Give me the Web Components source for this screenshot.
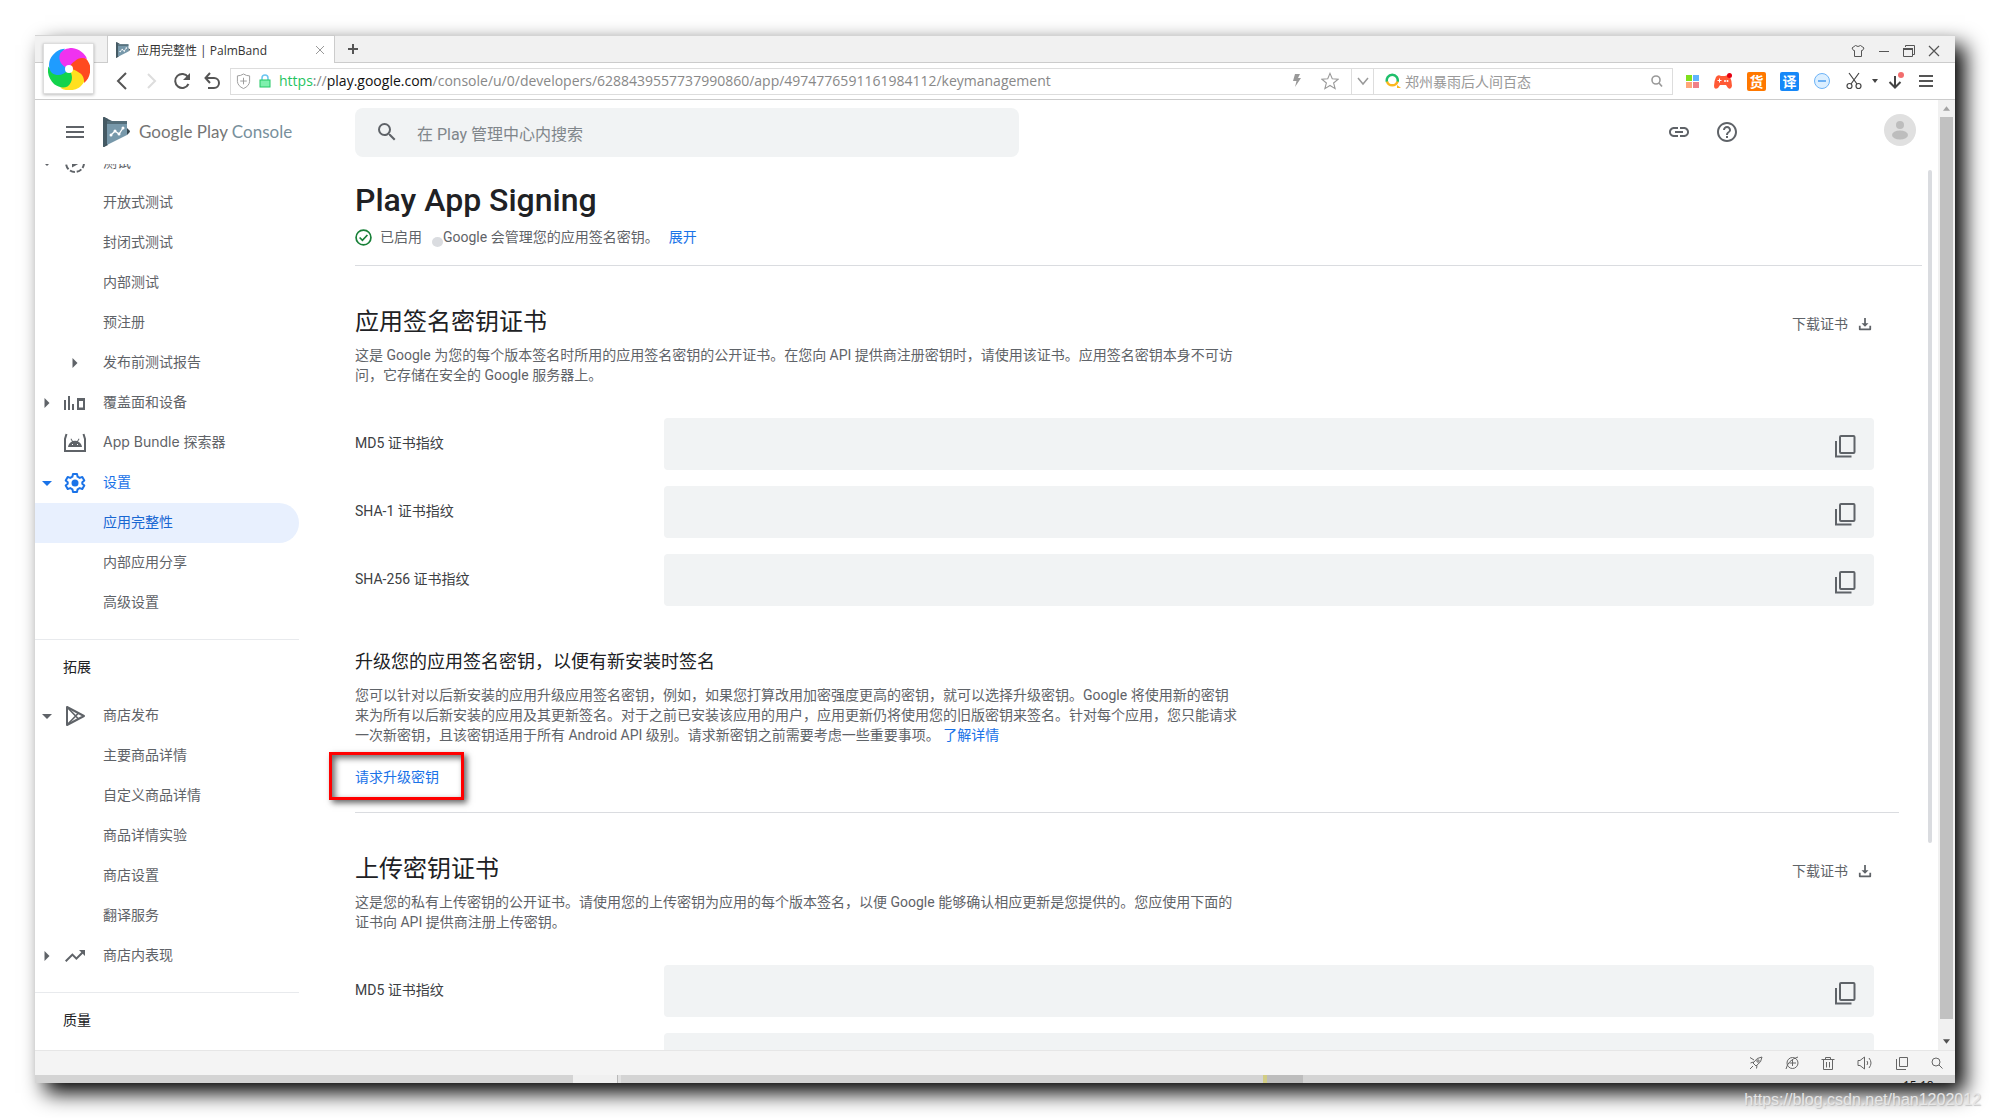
<!DOCTYPE html>
<html lang="zh-CN">
<head>
<meta charset="utf-8">
<title>应用完整性 | PalmBand</title>
<style>
  body {
    margin: 0;
    padding: 35px;
    box-sizing: border-box;
    height: 100vh;
    overflow: hidden;
    background: #fff;
    font-family: Roboto, "Noto Sans CJK SC", sans-serif;
    font-size: 14px;
    color: #5f6368;
  }
</style>
</head>
<body>
<browser-window>
  <browser-tabs slot="chrome"></browser-tabs>
  <browser-toolbar slot="chrome"></browser-toolbar>

  <console-header></console-header>
  <console-body>
    <side-nav slot="nav">
      <nav-item icon="testing" arrow="down">测试</nav-item>
      <nav-item>开放式测试</nav-item>
      <nav-item>封闭式测试</nav-item>
      <nav-item>内部测试</nav-item>
      <nav-item>预注册</nav-item>
      <nav-item arrow="right" nested>发布前测试报告</nav-item>
      <nav-item icon="reach" arrow="right">覆盖面和设备</nav-item>
      <nav-item icon="bundle">App Bundle 探索器</nav-item>
      <nav-item icon="gear" arrow="down" active>设置</nav-item>
      <nav-item active selected>应用完整性</nav-item>
      <nav-item>内部应用分享</nav-item>
      <nav-item>高级设置</nav-item>
      <nav-group>拓展</nav-group>
      <nav-item icon="play" arrow="down">商店发布</nav-item>
      <nav-item>主要商品详情</nav-item>
      <nav-item>自定义商品详情</nav-item>
      <nav-item>商品详情实验</nav-item>
      <nav-item>商店设置</nav-item>
      <nav-item>翻译服务</nav-item>
      <nav-item icon="trend" arrow="right">商店内表现</nav-item>
      <nav-group>质量</nav-group>
    </side-nav>

    <page-title heading="Play App Signing"></page-title>

    <cert-section heading="应用签名密钥证书">
      <span slot="intro">这是 Google 为您的每个版本签名时所用的应用签名密钥的公开证书。在您向 API 提供商注册密钥时，请使用该证书。应用签名密钥本身不可访问，它存储在安全的 Google 服务器上。</span>
      <finger-print label="MD5 证书指纹"></finger-print>
      <finger-print label="SHA-1 证书指纹"></finger-print>
      <finger-print label="SHA-256 证书指纹"></finger-print>
      <key-upgrade slot="more"></key-upgrade>
    </cert-section>

    <cert-section heading="上传密钥证书">
      <span slot="intro">这是您的私有上传密钥的公开证书。请使用您的上传密钥为应用的每个版本签名，以便 Google 能够确认相应更新是您提供的。您应使用下面的证书向 API 提供商注册上传密钥。</span>
      <finger-print label="MD5 证书指纹"></finger-print>
      <finger-print label="SHA-1 证书指纹"></finger-print>
    </cert-section>
  </console-body>

  <status-bar slot="footer"></status-bar>
  <task-bar slot="footer"></task-bar>
</browser-window>
<water-mark>https://blog.csdn.net/han1202012</water-mark>

<script>
(function() {
  const line = (body, w = 1) => `<g fill="none" stroke="currentColor" stroke-width="${w}">${body}</g>`;

  const blade = (turn, fill) =>
    `<path transform="rotate(${turn} 21 21)" fill="${fill}" d="M21 21C13 18 10 12 12 6C14 2 19 0 24 0C31 1 37 5 39 11C34 9 30 10 27 13C24 15 22 17 21 21z"/>`;

  // name: [viewBox, markup]
  const ICONS = {
    consoleMark: ['0 0 27 30', `
      <path d="M0 1Q0 0 1 0L5 2V28L1 30Q0 30 0 29z" fill="#37474f"/>
      <path d="M1 0L9 4H4V27L1 30Q0 30 0 29V1z" fill="#455a64"/>
      <path d="M24 11L27 14Q27 15 26 16L24 18z" fill="#37474f"/>
      <path d="M4 4H24V18L4 28z" fill="#7798aa"/>
      <path d="M4 4H24V7H4z" fill="#546e7a"/>
      <path d="M8 18L12 14L16 17L20 11" fill="none" stroke="#fff" stroke-width="1.3"/>
      <g fill="#fff"><circle cx="8" cy="18" r="1.5"/><circle cx="12" cy="14" r="1.5"/><circle cx="16" cy="17" r="1.5"/><circle cx="20" cy="11" r="1.5"/></g>`],
    pinwheel: ['0 0 42 42',
      blade(144, '#ffe01f') + blade(72, '#ff4a20') + blade(216, '#12d34c') + blade(288, '#1f9cff') + blade(0, '#f032f0') +
      '<circle cx="21" cy="21" r="4" fill="#fff"/>'],
    close: ['0 0 12 12', line('<path d="M2 2L10 10M10 2L2 10"/>')],
    plus: ['0 0 12 12', line('<path d="M6 1V11M1 6H11"/>', 2)],
    shirt: ['0 0 14 14', line('<path d="M4.500 1.500Q7 3.500 9.500 1.500L13 4L11.500 6.500H10.500V12.500H3.500V6.500H2.500L1 4z"/>')],
    minimize: ['0 0 12 12', line('<path d="M1 6.500H11"/>')],
    restore: ['0 0 12 12', line('<path d="M2.500 2V.5H11.500V9.500H10M.5 3.500H9.500V11.500H.5z"/><path d="M0 4H10" stroke-width="2"/>')],
    closeBig: ['0 0 12 12', line('<path d="M1 1L11 11M11 1L1 11"/>', 1.2)],
    back: ['0 0 18 18', line('<path d="M13 1L5 9L13 17"/>', 2)],
    forward: ['0 0 18 18', line('<path d="M5 2L12 9L5 16"/>', 2)],
    reload: ['0 0 18 18', line('<path d="M15.500 12A7 7 0 1 1 15 5"/>', 2) + '<path d="M17 1V8H10z" fill="currentColor"/>'],
    undo: ['0 0 18 18', line('<path d="M3 6H11A5 5 0 0 1 11 16H5M7 1L2.500 6L7 11"/>', 2)],
    shield: ['0 0 16 18', line('<path d="M8 1Q11 3 14.500 3V9Q14 14 8 16.500Q2 14 1.500 9V3Q5 3 8 1zM8 5V12M4.500 8.500H11.500"/>')],
    lock: ['0 0 12 14', `<path d="M3 6V4Q3 1 6 1Q9 1 9 4V6" fill="none" stroke="#6bc5f0" stroke-width="1.500"/>
      <rect x="1" y="6" width="10" height="7" fill="#7ff0ad" stroke="#22c864"/>`],
    bolt: ['0 0 12 14', '<path d="M4 1H9L7 5H10L4 14L5.500 8H2z" fill="currentColor"/>'],
    star: ['0 0 20 20', line('<path d="M10 1.500L12.500 7.500L19 8L14 12.200L15.700 18.500L10 15L4.300 18.500L6 12.200L1 8L7.500 7.500z"/>', 1.2)],
    chevron: ['0 0 12 12', line('<path d="M1 3L6 9L11 3"/>', 1.5)],
    engine: ['0 0 16 16', `<g fill="none" stroke-width="2.500"><path d="M2 9A5.500 5.500 0 1 1 12.500 9" stroke="#1fbf6b"/><path d="M2 8.500A5.500 5.500 0 0 0 12.500 8.500" stroke="#fbb81c"/></g><path d="M12 12L16 15H12z" fill="#fbb81c"/>`],
    find: ['0 0 12 12', line('<circle cx="5" cy="5" r="4"/><path d="M8 8L11 11.500"/>', 1.6)],
    zoom: ['0 0 12 12', line('<circle cx="5" cy="5" r="4"/><path d="M8 8L11.500 11.500"/>')],
    grid: ['0 0 13 13', '<path d="M0 0h6v6H0z" fill="#7fe01c"/><path d="M7 0h6v6H7z" fill="#5fb4ff"/><path d="M0 7h6v6H0z" fill="#ffa678"/><path d="M7 7h6v6H7z" fill="#f08088"/>'],
    game: ['0 0 20 17', `<path d="M3 4Q5 1 8 3H12Q15 1 17 4Q19 8 19 13Q18 17 15 15L13 12H7L5 15Q1 17 1 13Q1 8 3 4z" fill="#ff5a36"/>
      <path d="M4.500 7.500H8.500M6.500 5.500V9.500" stroke="#fff"/><circle cx="12" cy="8" r="1" fill="#fff"/><circle cx="14.500" cy="8" r="1" fill="#fff"/><circle cx="16.500" cy="2.500" r="2.500" fill="#e60012"/>`],
    minus: ['0 0 18 18', '<circle cx="9" cy="9" r="7.500" fill="#dcefff" stroke="#6db3f7"/><path d="M5 9H13" stroke="#4a9df0" stroke-width="1.500"/>'],
    scissors: ['0 0 18 18', line('<path d="M4 1L12 12M14 1L6 12"/><circle cx="4.500" cy="14" r="2.500"/><circle cx="13.500" cy="14" r="2.500"/>', 1.2)],
    caret: ['0 0 6 4', '<path d="M0 0H6L3 4z" fill="currentColor"/>'],
    download: ['0 0 18 18', line('<path d="M8 4V15M2.500 10L8 15.500L13.500 10"/>', 2) + '<circle cx="14" cy="3" r="3" fill="#f26d6d"/>'],
    bars: ['0 0 14 14', line('<path d="M0 2H14M0 7H14M0 12H14"/>', 2)],

    menu: ['0 0 24 24', '<path d="M3 6h18v2H3zM3 11h18v2H3zM3 16h18v2H3z" fill="currentColor"/>'],
    search: ['0 0 24 24', '<path d="M15.500 14h-.79l-.28-.27A6.471 6.471 0 0 0 16 9.500 6.500 6.500 0 1 0 9.500 16c1.610 0 3.090-.59 4.230-1.570l.27.28v.79l5 4.990L20.490 19l-4.990-5zm-6 0C7.010 14 5 11.990 5 9.500S7.010 5 9.500 5 14 7.010 14 9.500 11.990 14 9.500 14z" fill="currentColor"/>'],
    link: ['0 0 24 24', '<path d="M3.900 12c0-1.710 1.390-3.100 3.100-3.100h4V7H7c-2.760 0-5 2.240-5 5s2.240 5 5 5h4v-1.900H7c-1.710 0-3.100-1.390-3.100-3.100zM8 13h8v-2H8v2zm9-6h-4v1.900h4c1.710 0 3.100 1.390 3.100 3.100s-1.390 3.100-3.100 3.100h-4V17h4c2.760 0 5-2.240 5-5s-2.240-5-5-5z" fill="currentColor"/>'],
    help: ['0 0 24 24', '<path d="M11 18h2v-2h-2v2zm1-16C6.480 2 2 6.480 2 12s4.480 10 10 10 10-4.480 10-10S17.520 2 12 2zm0 18c-4.410 0-8-3.590-8-8s3.590-8 8-8 8 3.590 8 8-3.590 8-8 8zm0-14c-2.210 0-4 1.790-4 4h2c0-1.100.9-2 2-2s2 .9 2 2c0 2-3 1.750-3 5h2c0-2.250 3-2.500 3-5 0-2.210-1.790-4-4-4z" fill="currentColor"/>'],
    avatar: ['0 0 32 32', '<circle cx="16" cy="16" r="16" fill="#e0e0e0"/><g fill="#bdbdbd"><circle cx="16" cy="11" r="4"/><ellipse cx="16" cy="21" rx="8" ry="4.500"/></g>'],
    right: ['0 0 24 24', '<path d="M9.500 7L14.500 12L9.500 17z" fill="currentColor"/>'],
    down: ['0 0 24 24', '<path d="M7 10L12 15L17 10z" fill="currentColor"/>'],
    testing: ['0 0 24 24', '<path d="M9 7.500L17 12L9 16.500z" fill="currentColor"/><circle cx="12" cy="12" r="9" fill="none" stroke="currentColor" stroke-width="2" stroke-dasharray="5.200 1.870"/>'],
    reach: ['0 0 24 24', '<path d="M1 9h2v10H1zM5 5h2v14H5zM9 13h2v6H9zM14 7h8v12h-8zM16 10v6.500h4V10z" fill="currentColor" fill-rule="evenodd"/>'],
    bundle: ['0 0 24 24', line('<path d="M3.500 3L2 8V20H22V8L20.500 3"/>', 2) + '<path d="M5 16Q5.500 12 9 10.500L7.500 8L8.300 7.500L9.800 10Q12 9.500 14.200 10L15.700 7.500L16.500 8L15 10.500Q18.500 12 19 16z" fill="currentColor"/><path d="M9 13h1v1H9zM14 13h1v1h-1z" fill="#fff"/>'],
    gear: ['0 0 24 24', line('<path d="M10 3H14L14.600 5.700L16.700 6.900L19.300 6L21.300 9.500L19.300 11.300V12.700L21.300 14.500L19.300 18L16.700 17.100L14.600 18.300L14 21H10L9.400 18.300L7.300 17.100L4.700 18L2.700 14.500L4.700 12.700V11.300L2.700 9.500L4.700 6L7.300 6.900L9.400 5.700z" stroke-linejoin="round"/>', 2) + '<circle cx="12" cy="12" r="3.500" fill="currentColor"/>'],
    play: ['0 0 24 24', line('<path d="M4 3V21L21 12z" stroke-linejoin="round"/><path d="M4 3L15.500 15M4 21L15.500 9" stroke-width="1.700"/>', 2)],
    trend: ['0 0 24 24', '<path d="M16 6l2.290 2.290-4.880 4.880-4-4L2 16.590 3.410 18l6-6 4 4 6.300-6.290L22 12V6z" fill="currentColor"/>'],
    check: ['0 0 24 24', line('<circle cx="12" cy="12" r="10.500"/><path d="M6.500 12L10.500 16L17.500 8.500"/>', 2.4)],
    save: ['0 0 16 16', '<path d="M7 1H9V7H12L8 11L4 7H7zM1 10H3V13H13V10H15V14Q15 15 14 15H2Q1 15 1 14z" fill="currentColor"/>'],
    copy: ['0 0 24 24', line('<rect x="6" y="2" width="14.500" height="17" rx="1"/><path d="M2 7V22.500H17.500"/>', 2)],

    rocket: ['0 0 14 14', line('<path d="M13 1Q8 1 4 7L7 10Q13 6 13 1zM4.500 6L1.500 7M5 4L1 1.500M8 9.500L7.500 12.500M4 10L1 13"/><circle cx="9" cy="5" r="1.200"/>')],
    globe: ['0 0 14 14', line('<circle cx="7.500" cy="7" r="5.500"/><path d="M1 13Q3 4 13 1M7.500 3.500V10M4.500 7H11"/>')],
    trash: ['0 0 14 14', line('<path d="M.5 3.500H13.500M4.500 3V1.500H9.500V3M2.500 4V13.500H11.500V4M5.500 6V11.500M8.500 6V11.500"/>')],
    speaker: ['0 0 16 14', line('<path d="M1 4.500H3L7.500 1V13L3 9.500H1zM10 5Q11.500 7 10 9M12 2Q16 7 12 12"/>')],
    windows: ['0 0 14 14', line('<path d="M4.500 1.500H12.500V10.500H4.500zM1.500 3V13.500H11"/>')],
  };

  class AppIcon extends HTMLElement {
    constructor() {
      super();
      this.attachShadow({ mode: 'open' });
    }

    connectedCallback() {
      const [box, body] = ICONS[this.getAttribute('name')];
      const [, , w, h] = box.split(' ').map(Number);
      const size = Number(this.getAttribute('size') || w);
      this.shadowRoot.innerHTML = `
        <style>
          :host { display: inline-flex; flex: none; }
          svg { display: block; }
        </style>
        <svg width="${size}" height="${Math.round(size * h / w)}" viewBox="${box}" aria-hidden="true">${body}</svg>
      `;
    }
  }

  // Shared by every element that shows bare buttons
  const BUTTON = `
    button {
      display: inline-flex;
      align-items: center;
      justify-content: center;
      flex: none;
      padding: 0;
      border: 0;
      background: none;
      font: inherit;
      color: inherit;
      cursor: pointer;
    }
  `;

  const button = (icon, label, size = '') =>
    `<button type="button" aria-label="${label}"><app-icon name="${icon}" size="${size}"></app-icon></button>`;

  function define(name, view) {
    customElements.define(name, class extends HTMLElement {
      constructor() {
        super();
        this.attachShadow({ mode: 'open' });
      }

      connectedCallback() {
        this.shadowRoot.innerHTML = view(this);
      }
    });
  }

  customElements.define('app-icon', AppIcon);

  define('browser-window', () => `
    <style>
      :host {
        position: relative;
        display: flex;
        flex-direction: column;
        height: 100%;
        background: #fff;
        box-shadow: 10px 10px 20px #000;
      }
      .logo {
        position: absolute;
        left: 8px;
        top: 8px;
        display: flex;
        align-items: center;
        justify-content: center;
        width: 51px;
        height: 51px;
        background: #fff;
        border: 1px solid #ddd;
        box-sizing: border-box;
        box-shadow: 0 1px 3px #0004;
      }
      .viewport { display: flex; flex: 1; min-height: 0; }
      .page { display: flex; flex-direction: column; flex: 1; min-width: 0; }
      .scroll {
        display: flex;
        flex-direction: column;
        align-items: center;
        width: 17px;
        background: #f1f1f1;
        color: #505050;
      }
      .cap { display: flex; align-items: center; justify-content: center; height: 17px; }
      .up { transform: rotate(180deg); color: #a3a3a3; }
      .track { flex: 1; width: 13px; }
      .thumb { height: calc(100% - 14px); background: #c1c1c1; }
    </style>
    <slot name="chrome"></slot>
    <div class="logo"><app-icon name="pinwheel"></app-icon></div>
    <div class="viewport">
      <div class="page"><slot></slot></div>
      <div class="scroll">
        <div class="cap up"><app-icon name="caret" size="7"></app-icon></div>
        <div class="track"><div class="thumb"></div></div>
        <div class="cap"><app-icon name="caret" size="7"></app-icon></div>
      </div>
    </div>
    <slot name="footer"></slot>
  `);

  define('browser-tabs', () => `
    <style>
      :host {
        display: flex;
        height: 28px;
        padding-left: 72px;
        box-sizing: border-box;
        background: #f1f1f1;
        box-shadow: inset 0 -1px #ccc, inset 0 1px #d4d4d4;
        color: #555;
        font-size: 12px;
      }
      ${BUTTON}
      .tab {
        display: flex;
        align-items: center;
        gap: 7px;
        width: 228px;
        padding: 0 8px;
        box-sizing: border-box;
        background: #fff;
        border: 1px solid #ccc;
        border-bottom: 0;
        color: #333;
        font-family: "Open Sans", "Noto Sans CJK SC", sans-serif;
      }
      .tab span { flex: 1; }
      .tab button { color: #999; }
      .add { margin-left: 12px; }
      .controls { display: flex; align-items: center; gap: 13px; margin-left: auto; padding: 3px 15px 0 0; }
    </style>
    <div class="tab">
      <app-icon name="consoleMark" size="14"></app-icon>
      <span>应用完整性 | PalmBand</span>
      ${button('close', '关闭标签页')}
    </div>
    <button class="add" type="button" aria-label="新标签页"><app-icon name="plus"></app-icon></button>
    <div class="controls">
      ${button('shirt', '皮肤')}
      ${button('minimize', '最小化')}
      ${button('restore', '还原')}
      ${button('closeBig', '关闭')}
    </div>
  `);

  define('browser-toolbar', () => `
    <style>
      :host {
        display: flex;
        align-items: center;
        height: 37px;
        padding: 0 22px 0 78px;
        box-sizing: border-box;
        border-bottom: 1px solid #ccc;
        color: #555;
      }
      ${BUTTON}
      .history { display: flex; gap: 12px; width: 117px; }
      .history button:nth-child(2) { color: #ddd; }
      .bar {
        display: flex;
        align-items: center;
        flex: 1;
        height: 27px;
        box-sizing: border-box;
        border: 1px solid #ddd;
        color: #999;
      }
      .address { display: flex; align-items: center; flex: 1; gap: 8px; padding: 0 12px 0 5px; }
      .url {
        flex: 1;
        font: 14px/24px "Open Sans", sans-serif;
        color: #888;
        text-decoration: none;
        white-space: nowrap;
      }
      .url b { font-weight: 400; color: #111; }
      .url i { font-style: normal; color: #1fc45f; }
      .bolt { margin-right: 10px; }
      .drop { width: 23px; height: 25px; border: solid #ddd; border-width: 0 1px; }
      .query { display: flex; align-items: center; gap: 4px; width: 278px; padding: 0 9px 0 11px; }
      input {
        flex: 1;
        min-width: 0;
        padding: 0;
        border: 0;
        outline: 0;
        background: none;
        font: 14px "Noto Sans CJK SC", sans-serif;
        color: #555;
      }
      input::placeholder { color: #999; }
      .tools { display: flex; align-items: center; gap: 14px; margin-left: 13px; }
      .more { display: flex; align-items: center; gap: 9px; color: #444; }
      .badge {
        width: 19px;
        height: 19px;
        border-radius: 2px;
        font: bold 14px/19px "Noto Sans CJK SC", sans-serif;
        color: #fff;
      }
      .goods { background: #ff7800; }
      .translate { background: #1688f8; }
    </style>
    <div class="history">
      ${button('back', '后退')}
      ${button('forward', '前进')}
      ${button('reload', '刷新')}
      ${button('undo', '恢复')}
    </div>
    <div class="bar">
      <div class="address">
        <app-icon name="shield" size="15"></app-icon>
        <app-icon name="lock"></app-icon>
        <a class="url" href="#"><i>https</i>://<b>play.google.com</b>/console/u/0/developers/6288439557737990860/app/4974776591161984112/keymanagement</a>
        <span class="bolt"><app-icon name="bolt"></app-icon></span>
        ${button('star', '收藏', 18)}
      </div>
      <button class="drop" type="button" aria-label="展开"><app-icon name="chevron"></app-icon></button>
      <div class="query">
        <app-icon name="engine"></app-icon>
        <input type="text" aria-label="搜索" placeholder="郑州暴雨后人间百态">
        ${button('find', '搜索')}
      </div>
    </div>
    <div class="tools">
      ${button('grid', '应用')}
      ${button('game', '游戏')}
      <button class="badge goods" type="button">货</button>
      <button class="badge translate" type="button">译</button>
      ${button('minus', '扩展')}
      <div class="more">
        ${button('scissors', '截图')}
        ${button('caret', '更多')}
        ${button('download', '下载')}
      </div>
      ${button('bars', '菜单')}
    </div>
  `);

  define('console-header', () => `
    <style>
      :host {
        display: grid;
        grid-template-columns: 320px minmax(0, 664px) 1fr;
        align-items: center;
        height: 64px;
        padding-right: 22px;
      }
      ${BUTTON}
      .brand { display: flex; align-items: center; gap: 16px; padding-left: 28px; }
      .brand a {
        display: flex;
        align-items: center;
        gap: 9px;
        font: 17px/24px Lato, sans-serif;
        color: #757575;
        text-decoration: none;
      }
      .brand span span { color: #78909c; }
      .search {
        display: flex;
        align-items: center;
        gap: 18px;
        height: 49px;
        padding: 0 20px;
        border-radius: 8px;
        background: #f1f3f4;
      }
      input {
        flex: 1;
        padding: 4px 0 0;
        border: 0;
        outline: 0;
        background: none;
        font: 16px Roboto, "Noto Sans CJK SC", sans-serif;
        color: #3c4043;
      }
      input::placeholder { color: #80868b; }
      .actions { display: flex; align-items: center; justify-content: flex-end; gap: 24px; }
      .avatar { margin-left: 121px; padding-bottom: 4px; }
    </style>
    <div class="brand">
      ${button('menu', '菜单')}
      <a href="#"><app-icon name="consoleMark"></app-icon><span>Google Play <span>Console</span></span></a>
    </div>
    <label class="search">
      <app-icon name="search"></app-icon>
      <input type="text" aria-label="搜索" placeholder="在 Play 管理中心内搜索">
    </label>
    <div class="actions">
      ${button('link', '复制链接')}
      ${button('help', '帮助')}
      <button class="avatar" type="button" aria-label="账号"><app-icon name="avatar"></app-icon></button>
    </div>
  `);

  define('console-body', () => `
    <style>
      :host { display: flex; flex: 1; min-height: 0; overflow: hidden; }
      main { flex: 1; min-width: 0; padding-left: 56px; overflow: hidden; }
      .scroll { width: 4px; height: 76%; margin: 6px 6px 0 0; background: #dadce0; border-radius: 2px; }
    </style>
    <slot name="nav"></slot>
    <main><slot></slot></main>
    <div class="scroll"></div>
  `);

  define('side-nav', () => `
    <style>
      :host { display: block; width: 264px; overflow: hidden; }
      /* the list is scrolled part of the way down */
      nav { margin-top: -21px; }
    </style>
    <nav aria-label="管理中心"><slot></slot></nav>
  `);

  define('nav-item', el => {
    const icon = el.getAttribute('icon');
    const arrow = el.getAttribute('arrow');
    return `
      <style>
        :host {
          display: block;
          font-family: Inter, "Noto Sans CJK SC", sans-serif;
          color: #5f6368;
        }
        :host([active]) { color: #1a73e8; }
        :host([selected]) { background: #e8f0fe; color: #1967d2; border-radius: 0 20px 20px 0; }
        a {
          display: grid;
          grid-template-columns: 24px 32px 1fr;
          align-items: center;
          height: 40px;
          line-height: 20px;
          color: inherit;
          text-decoration: none;
        }
        .label { padding: 0 0 2px 12px; }
        :host([nested]) .arrow { grid-column: 2; }
        :host([nested]) .icon { display: none; }
        .arrow, .icon { display: flex; justify-content: center; }
      </style>
      <a href="#">
        <span class="arrow">${arrow ? `<app-icon name="${arrow}"></app-icon>` : ''}</span>
        <span class="icon">${icon ? `<app-icon name="${icon}"></app-icon>` : ''}</span>
        <span class="label"><slot></slot></span>
      </a>
    `;
  });

  define('nav-group', () => `
    <style>
      :host {
        display: block;
        margin-top: 16px;
        padding: 17px 28px 19px;
        border-top: 1px solid #e8eaed;
        line-height: 20px;
        color: #202124;
      }
    </style>
    <slot></slot>
  `);

  define('page-title', el => `
    <style>
      :host {
        display: block;
        margin-right: 6px;
        padding: 16px 0 18px;
        border-bottom: 1px solid #dadce0;
      }
      h1 { margin: 0 0 7px; font: 500 32px/40px Roboto, sans-serif; color: #202124; }
      p { display: flex; align-items: center; gap: 10px; margin: 0; line-height: 20px; }
      .state { display: flex; align-items: center; gap: 8px; }
      .state app-icon { color: #188038; }
      .dot { width: 11px; height: 10px; margin-top: 10px; border-radius: 50%; background: #dadce0; }
      .text { display: flex; }
      a { color: #1a73e8; text-decoration: none; }
    </style>
    <h1>${el.getAttribute('heading')}</h1>
    <p>
      <span class="state"><app-icon name="check" size="17"></app-icon>已启用</span>
      <span class="text"><span class="dot"></span>Google 会管理您的应用签名密钥。</span>
      <a href="#">展开</a>
    </p>
  `);

  define('cert-section', el => `
    <style>
      :host { display: block; padding: 40px 54px 0 0; }
      ${BUTTON}
      header { display: flex; align-items: flex-end; justify-content: space-between; }
      h2 { margin: 0; font-size: 24px; line-height: 32px; font-weight: 400; color: #202124; }
      header button { gap: 10px; padding: 0 2px 2px 0; line-height: 24px; }
      p { max-width: 884px; margin: 7px 0 33px; line-height: 20px; }
      .rows { display: grid; gap: 16px; }
    </style>
    <header>
      <h2>${el.getAttribute('heading')}</h2>
      <button type="button">下载证书 <app-icon name="save" size="14"></app-icon></button>
    </header>
    <p><slot name="intro"></slot></p>
    <div class="rows"><slot></slot></div>
    <slot name="more"></slot>
  `);

  define('finger-print', el => `
    <style>
      :host { display: grid; grid-template-columns: 309px 1fr; align-items: center; color: #3c4043; }
      ${BUTTON}
      label { padding-bottom: 4px; }
      .field {
        display: flex;
        align-items: center;
        height: 52px;
        padding-right: 16px;
        border-radius: 4px;
        background: #f1f3f4;
        color: #5f6368;
      }
      input { flex: 1; border: 0; outline: 0; background: none; font: inherit; }
      button { padding-top: 4px; }
    </style>
    <label for="value">${el.getAttribute('label')}</label>
    <div class="field">
      <input id="value" type="text" readonly>
      ${button('copy', '复制')}
    </div>
  `);

  define('key-upgrade', () => `
    <style>
      :host {
        display: block;
        margin-right: -25px;
        padding: 44px 0 18px;
        border-bottom: 1px solid #dadce0;
      }
      ${BUTTON}
      h3 { margin: 0; font-size: 18px; line-height: 24px; font-weight: 400; color: #202124; }
      p { max-width: 884px; margin: 11px 0 13px; line-height: 20px; }
      a, button { color: #1a73e8; text-decoration: none; }
      button { height: 36px; }
      .action { position: relative; display: flex; }
      .mark {
        position: absolute;
        left: -26px;
        top: -6px;
        width: 135px;
        height: 48px;
        box-sizing: border-box;
        border: 3px solid #f00;
        box-shadow: 3px 3px 6px #0009, inset 3px 3px 6px #0009;
        pointer-events: none;
      }
    </style>
    <h3>升级您的应用签名密钥，以便有新安装时签名</h3>
    <p>您可以针对以后新安装的应用升级应用签名密钥，例如，如果您打算改用加密强度更高的密钥，就可以选择升级密钥。Google 将使用新的密钥来为所有以后新安装的应用及其更新签名。对于之前已安装该应用的用户，应用更新仍将使用您的旧版密钥来签名。针对每个应用，您只能请求一次新密钥，且该密钥适用于所有 Android API 级别。请求新密钥之前需要考虑一些重要事项。 <a href="#">了解详情</a></p>
    <div class="action">
      <button type="button">请求升级密钥</button>
      <div class="mark"></div>
    </div>
  `);

  define('status-bar', () => `
    <style>
      :host {
        display: flex;
        align-items: center;
        justify-content: flex-end;
        gap: 22px;
        height: 24px;
        padding-right: 12px;
        border-top: 1px solid #e6e6e6;
        background: #f4f4f4;
        color: #666;
      }
      ${BUTTON}
    </style>
    ${button('rocket', '加速')}
    ${button('globe', '内核')}
    ${button('trash', '清理')}
    ${button('speaker', '静音')}
    ${button('windows', '分屏')}
    ${button('zoom', '缩放')}
  `);

  define('task-bar', () => `
    <style>
      :host {
        display: grid;
        grid-template-columns: 538fr 44fr 4fr 642fr 4fr 36fr 600fr 52fr;
        height: 8px;
        overflow: hidden;
        background: #d4d4d4;
      }
      .window { background: #f0f0f0; }
      .edge { background: #e2e2e2; border-left: 1px solid #b8b8b8; }
      .alert { background: #d2cd84; }
      .busy { background: #bdbdbd; }
      time { padding-top: 3px; font: 12px/16px "Open Sans", sans-serif; color: #111; }
    </style>
    <span></span><span class="window"></span><span class="edge"></span><span></span>
    <span class="alert"></span><span class="busy"></span><span></span><time>15:18</time>
  `);

  define('water-mark', () => `
    <style>
      :host {
        position: absolute;
        right: 9px;
        bottom: 8px;
        font: 16px/20px "Liberation Sans", sans-serif;
        color: #e6e6e6;
        text-shadow: 1px 1px 1px #9998;
      }
    </style>
    <slot></slot>
  `);
})();
</script>
</body>
</html>
